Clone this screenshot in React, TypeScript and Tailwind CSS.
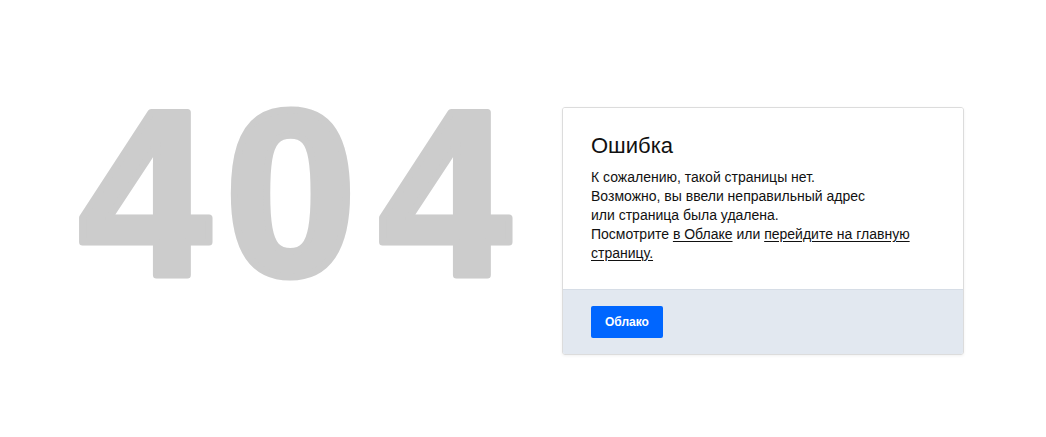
export default function App() {
  return (
    <div className="min-h-screen bg-white font-['Liberation_Sans',Arial,sans-serif] text-[#111]">
      <div className="flex items-start gap-[48px] pl-[74px] pt-[93px]">
        {/* 404 — bold Arial glyphs with a thin round stroke for the soft corners */}
        <svg width="440" height="240" viewBox="0 0 440 240" className="shrink-0 select-none" aria-label="404">
          <g
            fill="#cccccc"
            stroke="#cccccc"
            strokeWidth="7"
            strokeLinejoin="round"
            fontFamily="'Liberation Sans', Arial, sans-serif"
            fontWeight="700"
            fontSize="236"
          >
            <text x="5" y="182">4</text>
            <text x="151" y="182">0</text>
            <text x="305" y="182">4</text>
          </g>
        </svg>
        <div className="mt-[14px] w-[402px] rounded-[3px] border border-[#dcdcdc] shadow-[0_1px_3px_rgba(0,0,0,0.06)] overflow-hidden">
          <div className="px-[28px] pt-[24px] pb-[26px] bg-white">
            <h1 className="text-[22px] leading-[28px] mb-[8px]">Ошибка</h1>
            <p className="text-[14px] leading-[19px]">
              К сожалению, такой страницы нет.
              <br />
              Возможно, вы ввели неправильный адрес
              <br />
              или страница была удалена.
              <br />
              Посмотрите{' '}
              <a href="#" className="underline underline-offset-2">в Облаке</a>{' '}
              или{' '}
              <a href="#" className="underline underline-offset-2">перейдите на главную страницу.</a>
            </p>
          </div>
          <div className="border-t border-[#d6dde6] bg-[#e2e8f0] px-[28px] py-[16px]">
            <button className="h-[32px] px-[14px] rounded-[2px] bg-[#0066ff] text-white text-[12px] font-bold">
              Облако
            </button>
          </div>
        </div>
      </div>
    </div>
  );
}
